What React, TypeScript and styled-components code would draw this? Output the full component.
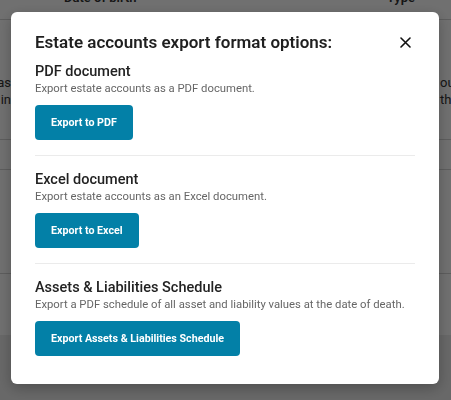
import styled, { createGlobalStyle } from "styled-components";

const GlobalStyle = createGlobalStyle`
  html, body {
    margin: 0;
    padding: 0;
    background: #ececec;
    font-family: Roboto, "Liberation Sans", Arial, sans-serif;
  }
`;

/* ---------- page behind the dialog ---------- */

const Page = styled.div`
  background: #ffffff;
  width: 451px;
  overflow: hidden;
`;

const TableRow = styled.div<{ $height: number; $header?: boolean; $last?: boolean }>`
  display: flex;
  justify-content: space-between;
  align-items: ${({ $header }) => ($header ? "flex-end" : "flex-start")};
  height: ${({ $height }) => $height}px;
  border-bottom: ${({ $last }) => ($last ? "none" : "1px solid #d4d4d4")};
  box-sizing: border-box;
  padding: 0 36px 0 64px;
  font-size: 13px;
  font-weight: ${({ $header }) => ($header ? 600 : 400)};
  color: #333;
  line-height: 17px;
`;

const HeaderCell = styled.span`
  transform: translateY(-13px);
`;

const EdgeText = styled.div<{ $side: "left" | "right" }>`
  display: flex;
  flex-direction: column;
  margin-left: ${({ $side }) => ($side === "left" ? "-64px" : "0")};
  margin-right: ${({ $side }) => ($side === "right" ? "-36px" : "0")};
  width: ${({ $side }) => ($side === "left" ? "30px" : "12px")};
  align-items: ${({ $side }) => ($side === "left" ? "flex-end" : "flex-start")};
  transform: ${({ $side }) => ($side === "left" ? "translateX(-19px)" : "translateX(1px)")};
  font-size: 13px;
  line-height: 17px;
  color: #333;
  white-space: nowrap;
  padding-top: 54px;
`;

/* ---------- overlay + dialog ---------- */

const Overlay = styled.div`
  position: fixed;
  inset: 0;
  background: rgba(0, 0, 0, 0.56);
  display: flex;
  align-items: flex-start;
  padding: 12px 12px 0 11px;
`;

const Dialog = styled.div`
  width: 428px;
  box-sizing: border-box;
  background: #ffffff;
  border-radius: 6px;
  box-shadow: 0 4px 14px rgba(0, 0, 0, 0.25);
  padding: 20px 24px 28px;
  display: flex;
  flex-direction: column;
`;

const DialogHeader = styled.div`
  display: flex;
  justify-content: space-between;
  align-items: center;
  margin-bottom: 11px;
`;

const Title = styled.h2`
  margin: 0;
  font-size: 17px;
  line-height: 20px;
  font-weight: 600;
  color: #1f1f1f;
`;

const CloseButton = styled.button`
  width: 20px;
  height: 20px;
  padding: 0;
  border: none;
  background: transparent;
  display: flex;
  align-items: center;
  justify-content: center;
  cursor: pointer;
  color: #111;
`;

const Section = styled.section`
  display: flex;
  flex-direction: column;
  align-items: flex-start;
  padding-bottom: 15px;
  border-bottom: 1px solid #ebebeb;
  margin-bottom: 15px;

  &:last-child {
    border-bottom: none;
    padding-bottom: 0;
    margin-bottom: 0;
  }
`;

const SectionTitle = styled.h3`
  margin: 0;
  font-size: 14.5px;
  line-height: 18px;
  font-weight: 500;
  color: #222;
`;

const SectionText = styled.p`
  margin: 0 0 8px;
  font-size: 11.3px;
  line-height: 16px;
  color: #666;
`;

const ExportButton = styled.button`
  height: 35px;
  padding: 0 16px;
  border: none;
  border-radius: 4px;
  background: #0380a7;
  color: #ffffff;
  font-family: inherit;
  font-size: 10.7px;
  font-weight: 700;
  cursor: pointer;
`;

const options = [
  {
    title: "PDF document",
    text: "Export estate accounts as a PDF document.",
    action: "Export to PDF",
  },
  {
    title: "Excel document",
    text: "Export estate accounts as an Excel document.",
    action: "Export to Excel",
  },
  {
    title: "Assets & Liabilities Schedule",
    text: "Export a PDF schedule of all asset and liability values at the date of death.",
    action: "Export Assets & Liabilities Schedule",
  },
];

const App = () => {
  return (
    <>
      <GlobalStyle />
      <Page>
        <TableRow $height={20} $header>
          <HeaderCell>Date of birth</HeaderCell>
          <HeaderCell>Type</HeaderCell>
        </TableRow>
        <TableRow $height={120}>
          <EdgeText $side="left">
            <span>eas</span>
            <span>in</span>
          </EdgeText>
          <EdgeText $side="right">
            <span>ou</span>
            <span>th</span>
          </EdgeText>
        </TableRow>
        <TableRow $height={30} />
        <TableRow $height={104} />
        <TableRow $height={61} $last />
      </Page>
      <Overlay>
        <Dialog role="dialog">
          <DialogHeader>
            <Title>Estate accounts export format options:</Title>
            <CloseButton aria-label="Close">
              <svg width="11" height="11" viewBox="0 0 11 11">
                <path
                  d="M1 1 L10 10 M10 1 L1 10"
                  stroke="currentColor"
                  strokeWidth="1.6"
                  strokeLinecap="round"
                />
              </svg>
            </CloseButton>
          </DialogHeader>
          {options.map((o) => (
            <Section key={o.title}>
              <SectionTitle>{o.title}</SectionTitle>
              <SectionText>{o.text}</SectionText>
              <ExportButton>{o.action}</ExportButton>
            </Section>
          ))}
        </Dialog>
      </Overlay>
    </>
  );
};

export default App;
